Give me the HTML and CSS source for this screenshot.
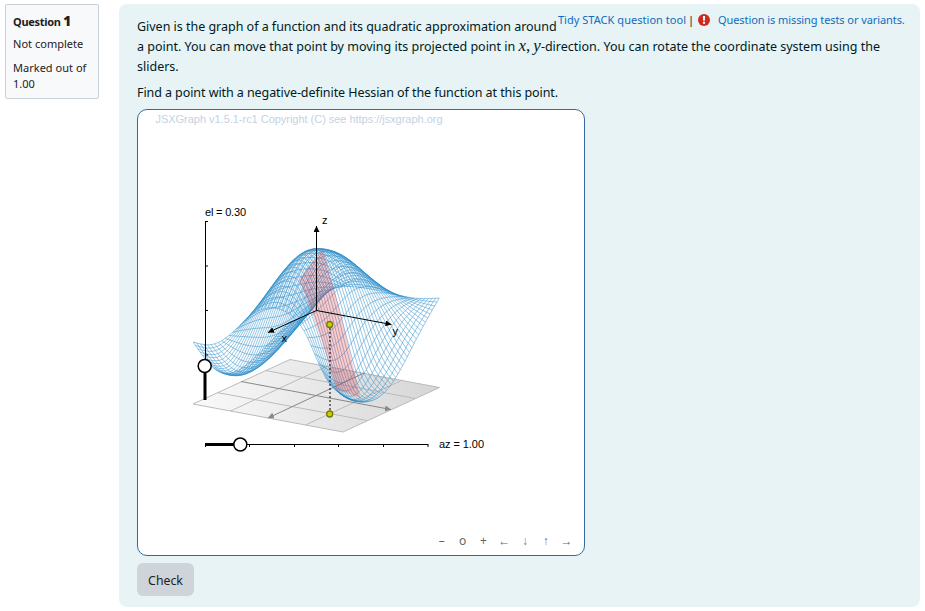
FILE: index.html
```html
<!DOCTYPE html>
<html lang="en">
<head>
<meta charset="utf-8">
<title>Question 1</title>
<link rel="stylesheet" href="styles.css">
</head>
<body>
<main class="question">
  <aside class="info">
    <h3>Question <b>1</b></h3>
    <p class="state">Not complete</p>
    <p class="grade">Marked out of 1.00</p>
  </aside>
  <section class="content">
    <nav class="tools"><a>Tidy STACK question tool</a><span>|</span><svg class="alert" viewBox="0 0 12 12"><circle cx="6" cy="6" r="6" fill="#cf2a1e"/><path d="M4.900 2h2.200l-.3 4.700H5.200zM5 7.700h2v2H5z" fill="#fff"/></svg><a class="warn">Question is missing tests or variants.</a></nav>
    <p class="intro"><span class="l1">Given is the graph of a function and its quadratic approximation around</span><br><span class="l2">a point. You can move that point by moving its projected point in <i>x</i><i class="comma">,</i><i>y</i>-direction. You can rotate the coordinate system using the</span><br><span>sliders.</span></p>
    <p class="task">Find a point with a negative-definite Hessian of the function at this point.</p>
    <div class="board">
      <svg id="plot" width="446" height="445" viewBox="138 110 446 445">
        <defs>
          <linearGradient id="floor" x1="0" x2="1"><stop offset="0" stop-color="#fafafa"/><stop offset="1" stop-color="#d6d6d6"/></linearGradient>
          <marker id="tip" viewBox="0 0 6 6" refX="6" refY="3" markerWidth="6" markerHeight="6" markerUnits="userSpaceOnUse" orient="auto"><path d="M0 0L6 3L0 6z"/></marker>
          <marker id="tipg" viewBox="0 0 6 6" refX="6" refY="3" markerWidth="6" markerHeight="6" markerUnits="userSpaceOnUse" orient="auto"><path d="M0 0L6 3L0 6z" fill="#888"/></marker>
        </defs>
        <text class="copy" x="155.500" y="123" textLength="287">JSXGraph v1.5.1-rc1 Copyright (C) see https://jsxgraph.org</text>
        <path d="M193 404L290 359.500L439.500 387.500L343 432z" fill="url(#floor)" stroke="#bbb"/>
        <path class="grid" d="M217 392.500L367 420.500M265.500 370.500L415.500 398.500M230.500 411L327.500 366M305.500 425L402.500 380"/>
        <path class="faxis" d="M241 381.500L391 409.500" marker-end="url(#tipg)"/>
        <path class="faxis" d="M364 373L268 418" marker-end="url(#tipg)"/>
        <path id="mesh" class="mesh"/>
        <path id="patch" class="patch"/>
        <path class="axis" d="M316.500 310.500V226" marker-end="url(#tip)"/>
        <path class="axis" d="M316.500 310.500L268 332.500" marker-end="url(#tip)"/>
        <path class="axis" d="M316.500 310.500L391.500 324.500" marker-end="url(#tip)"/>
        <path class="drop" d="M330 324V414"/>
        <circle class="dot" cx="329.700" cy="324.500" r="3"/><circle class="dot" cx="329.700" cy="414" r="3"/>
        <path class="axis" d="M205.500 400V221.500M205 221.500h3M205 266h3M205 310.500h3M205 355h3M205 444.500H428M205.500 444v3M249.500 444v3M294.500 444v3M338.500 444v3M383.500 444v3M428 444v3"/>
        <path class="bar" d="M205 366V400M205 444.500H240"/>
        <circle class="knob" cx="204.700" cy="366" r="6.500"/><circle class="knob" cx="240.300" cy="444.500" r="6.500"/>
        <text x="205" y="216" textLength="41">el = 0.30</text><text x="439" y="448" textLength="45">az = 1.00</text>
        <text x="322" y="224">z</text><text x="281.500" y="342">x</text><text x="392.500" y="335">y</text>
      </svg>
      <div class="navbar"><span>–</span><span>o</span><span>+</span><span>←</span><span class="down">↓</span><span class="up">↑</span><span>→</span></div>
    </div>
    <button class="check">Check</button>
  </section>
</main>
<script src="plot.js"></script>
</body>
</html>
```
FILE: styles.css
```css
* { box-sizing: border-box; }
body { margin: 0; background: #fff; color: #1d2125; font: 12px/20px "Noto Sans", sans-serif; }
.question { display: flex; align-items: flex-start; gap: 20px; padding: 4px 5px 0; }
.info { width: 94px; height: 95px; padding: 6px 7px; background: #f8f9fa; border: 1px solid #cad0d7; border-radius: 2px; line-height: 16px; font-size: 11px; letter-spacing: .02px; }
.info h3 { margin: 0 0 4px; font-size: 11px; line-height: 20px; letter-spacing: -.3px; white-space: nowrap; }
.info h3 b { font-size: 13.500px; }
.info p { margin: 0 0 8px; }
.content { width: 801px; height: 603px; padding: 13px 18px 12px; background: #e7f3f5; border-radius: 8px; color: #001a1e; position: relative; }
.tools { position: absolute; top: 8px; right: 13px; display: flex; align-items: center; font-size: 11px; line-height: 16px; letter-spacing: .04px; }
.tools a { color: #0f6cbf; width: 129px; white-space: nowrap; }
.tools span { margin: 0 4px 0 2px; }
.tools .warn { width: 189px; margin-left: 8px; letter-spacing: -.08px; }
.alert { width: 12px; height: 12px; }
.tools a:first-child { width: 128px; }
.intro { margin: 0 0 6px; white-space: nowrap; font-size: 12.500px; }
.l1 { letter-spacing: -.02px; }
.l2 { letter-spacing: 0; }
.intro i { font: italic 17px/16px "Liberation Serif", serif; }
.intro i.comma { font-style: normal; margin-right: 3px; }
.task { margin: 0 0 6px; font-size: 12.500px; letter-spacing: -.075px; }
.board { width: 448px; height: 447px; background: #fff; border: 1px solid #356aa0; border-radius: 10px; position: relative; overflow: hidden; }
.board svg { display: block; }
.board text { font: 11px "Liberation Sans", sans-serif; }
.board .copy { fill: #c4d2e3; }
.navbar { position: absolute; right: 9px; bottom: 4px; display: flex; gap: 4px; color: #666; font-size: 12px; }
.navbar span { width: 16.800px; text-align: center; }
.navbar .down { color: #4d7fa3; }
.navbar .up { color: #8a6a4a; }
.check { display: block; width: 57px; height: 33px; margin-top: 7px; padding: 1px 0 0; border: 0; border-radius: 6px; background: #ced4da; color: #1d2125; font: 12.300px "Noto Sans", sans-serif; }
.grid { fill: none; stroke: #bbb; }
.faxis { stroke: #888; }
.mesh { fill: none; stroke: #2f8fca; stroke-width: .5; }
.patch { fill: #f00; fill-opacity: .2; }
.axis { fill: none; stroke: #000; }
.drop { stroke: #000; stroke-dasharray: 2 2; }
.dot { fill: #cccc00; stroke: #77770a; stroke-width: 1.300; }
.bar { fill: none; stroke: #000; stroke-width: 3; }
.knob { fill: #fff; stroke: #000; stroke-width: 1.500; }
```
FILE: plot.js
```js
// Surface heights on a regular lattice: rows run over x, columns over y, both in [-1, 1].
const table = [
  [-48, -36, -12, -2, 0, 0, -1, 0, 4],
  [-62, -54, -20, 18, 40, 35, 16, -8, -28],
  [-72, -66, -26, 28, 60, 57, 21, -34, -60],
  [-63, -58, -18, 30, 60, 58, 5.5, -56, -66],
  [-23, -22, -8, 13, 25, 24, 6, -32, -49]
];

// Natural cubic spline through equally spaced values, t in [-1, 1].
function spline(v, t) {
  const n = v.length, c = [0], d = [0], m = Array(n).fill(0);
  for (let i = 1; i < n - 1; i++) {
    const k = 4 - c[i - 1];
    c[i] = 1 / k;
    d[i] = (6 * (v[i + 1] - 2 * v[i] + v[i - 1]) - d[i - 1]) / k;
  }
  for (let i = n - 2; i > 0; i--) m[i] = d[i] - c[i] * m[i + 1];
  const p = (t + 1) / 2 * (n - 1), i = Math.max(0, Math.min(n - 2, Math.floor(p)));
  const b = p - i, a = 1 - b;
  return a * v[i] + b * v[i + 1] + ((a * a * a - a) * m[i] + (b * b * b - b) * m[i + 1]) / 6;
}
const height = (x, y) => spline(table.map(row => spline(row, y)), x);
const project = (x, y, z) =>
  (316.2 - 48 * x + 75 * y).toFixed(2) + ' ' + (310.5 + 22.5 * x + 14 * y - z).toFixed(2);

const steps = 42;
let d = '';
for (let i = 0; i <= steps; i++) {
  const s = 2 * i / steps - 1;
  for (const along of [0, 1]) {
    for (let j = 0; j <= steps; j++) {
      const t = 2 * j / steps - 1, x = along ? t : s, y = along ? s : t;
      d += (j ? 'L' : 'M') + project(x, y, height(x, y));
    }
  }
}
document.getElementById('mesh').setAttribute('d', d);

// Second-order expansion around (0.5, 0.5).
const quad = (u, v) => 5.5 - 245 * v + 154 * u * v - 10 * u * u - 177 / 2 * v * v;
const corners = [[-1, -1], [1, -1], [1, 1], [-1, 1], [-1, -1]];
let q = '';
for (let k = 0; k < 4; k++) {
  for (let j = 0; j < 12; j++) {
    const u = .25 * (corners[k][0] + (corners[k + 1][0] - corners[k][0]) * j / 12);
    const v = .25 * (corners[k][1] + (corners[k + 1][1] - corners[k][1]) * j / 12);
    q += (q ? 'L' : 'M') + project(.5 + u, .5 + v, quad(u, v));
  }
}
document.getElementById('patch').setAttribute('d', q + 'z');
```
